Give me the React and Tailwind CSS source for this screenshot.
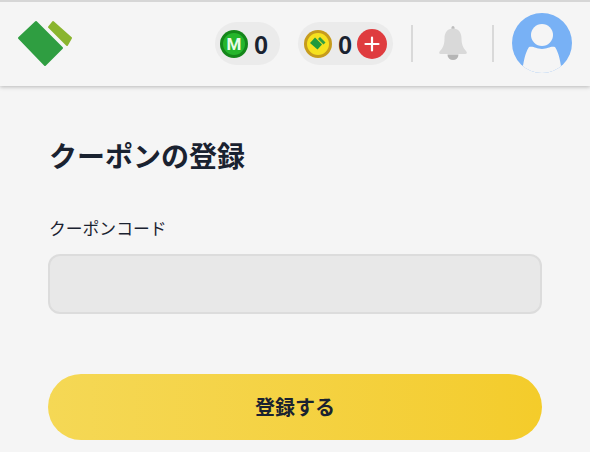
const font = { fontFamily: '"Noto Sans CJK JP", "Noto Sans", sans-serif' }

function Logo() {
  return (
    <svg width="56" height="48" viewBox="17 20 56 48" className="block">
      <polygon points="36,22 62,48 45,65 19,38" fill="#2f9e41" stroke="#2f9e41" strokeWidth="2" strokeLinejoin="round" />
      <polygon points="53,22 71,38 67,45 49,27" fill="#8ab52f" stroke="#8ab52f" strokeWidth="2" strokeLinejoin="round" />
    </svg>
  )
}

function MedalM() {
  return (
    <svg width="28" height="28" viewBox="0 0 28 28">
      <circle cx="14" cy="14" r="14" fill="#14861a" />
      <circle cx="14" cy="14" r="11" fill="#25b52c" />
      <text x="14" y="20" textAnchor="middle" fontSize="17" fontWeight="700" fill="#eafbe8" fontFamily="Roboto, sans-serif">M</text>
    </svg>
  )
}

function MedalCoin() {
  return (
    <svg width="28" height="28" viewBox="0 0 28 28">
      <circle cx="14" cy="14" r="14" fill="#c79c1d" />
      <circle cx="14" cy="14" r="11" fill="#f6e11f" />
      <polygon points="11,7.500 18,14.500 13.500,19.500 6,13" fill="#1f9a3c" />
      <polygon points="16,7 21.500,12.500 19.500,14.500 14,9" fill="#2f9e41" />
    </svg>
  )
}

function Bell() {
  return (
    <svg width="30" height="36" viewBox="0 0 30 36">
      <rect x="13.500" y="0" width="3" height="5" rx="1.500" fill="#bdbdbd" />
      <path d="M15 2.500c-5.500 0-8.500 4-8.500 10 0 5-1 9-4.500 12.500-1.200 1.200-1.200 3 .8 3h24.400c2 0 2-1.800.8-3-3.500-3.500-4.500-7.500-4.500-12.500 0-6-3-10-8.500-10z" fill="#d9d9d9" />
      <path d="M9.500 28.500h11a5.500 5.500 0 0 1-11 0z" fill="#b5b5b5" />
    </svg>
  )
}

function Avatar() {
  return (
    <svg width="60" height="60" viewBox="0 0 60 60" className="block">
      <defs>
        <clipPath id="avatarClip"><circle cx="30" cy="30" r="30" /></clipPath>
      </defs>
      <circle cx="30" cy="30" r="30" fill="#78b1f5" />
      <g clipPath="url(#avatarClip)">
        <path d="M10 62 C11 50 13 40 17 34 C22 33 24 36 30 36 C36 36 38 33 43 34 C47 40 49 50 50 62 Z" fill="#f5f5f5" />
      </g>
      <circle cx="30" cy="22" r="11" fill="#f5f5f5" />
    </svg>
  )
}

export default function App() {
  return (
    <div className="w-[590px] h-[452px] overflow-hidden bg-[#f5f5f5] text-[#1a2230]" style={font}>
      <header className="h-[86px] border-t-2 border-[#d6d6d6] bg-[#f5f5f5] shadow-[0_1px_4px_rgba(0,0,0,0.25)] flex items-center pl-[17px] pr-[18px] pb-[1px]">
        <Logo />
        <div className="ml-auto flex items-center">
          <div className="w-[65px] h-[43px] rounded-full bg-[#ebebeb] flex items-center pl-[5px] gap-[6px]">
            <MedalM />
            <span className="text-[24px] font-semibold leading-none">0</span>
          </div>
          <div className="ml-[18px] w-[95px] h-[43px] rounded-full bg-[#ebebeb] flex items-center pl-[6px] pr-[6px]">
            <MedalCoin />
            <span className="ml-[6px] text-[24px] font-semibold leading-none">0</span>
            <div className="ml-auto w-[30px] h-[30px] rounded-full bg-[#df3c3f] flex items-center justify-center">
              <svg width="18" height="18" viewBox="0 0 18 18">
                <path d="M9 2.500v13M2.500 9h13" stroke="#fff" strokeWidth="2.200" strokeLinecap="round" />
              </svg>
            </div>
          </div>
          <div className="ml-[18px] w-[2px] h-[37px] bg-[#d9d9d9]" />
          <div className="ml-[25px]"><Bell /></div>
          <div className="ml-[24px] w-[2px] h-[37px] bg-[#d9d9d9]" />
          <div className="ml-[18px] mb-px"><Avatar /></div>
        </div>
      </header>
      <main className="px-[48px]">
        <h1 className="mt-[47px] ml-px text-[28px] font-semibold leading-[44px]">クーポンの登録</h1>
        <label className="block mt-[37px] ml-px text-[16.800px] leading-[28px]">クーポンコード</label>
        <div className="mt-[12px] h-[60px] rounded-[12px] bg-[#e8e8e8] border-2 border-[#dcdcdc]" />
        <button className="mt-[60px] w-full h-[66px] rounded-full bg-gradient-to-r from-[#f5d855] to-[#f4cc2a] text-[20px] font-semibold">登録する</button>
      </main>
    </div>
  )
}
